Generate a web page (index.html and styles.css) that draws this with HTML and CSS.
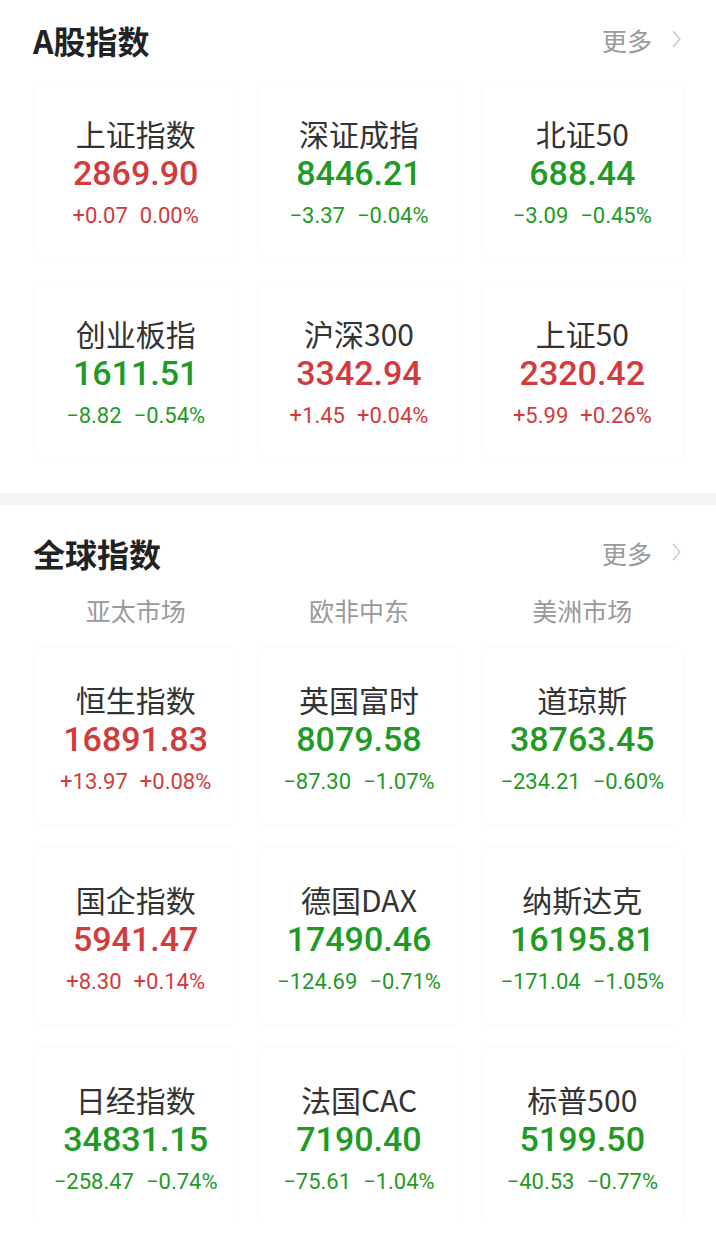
FILE: index.html
```html
<!DOCTYPE html>
<html lang="zh-CN">
<head>
    <meta charset="UTF-8">
    <meta name="viewport" content="width=device-width, initial-scale=1.0">
    <title>指数</title>
    <link rel="stylesheet" href="styles.css">
</head>
<body>
    <!-- A股指数 -->
    <section class="section first">
        <div class="section-head">
            <h2>A股指数</h2>
            <a class="more" href="#">更多
                <svg width="12" height="20" viewBox="0 0 12 20"><polyline points="3,2 10,10 3,18" fill="none" stroke="#c8c8c8" stroke-width="1.4"/></svg>
            </a>
        </div>
        <div class="grid">
            <div class="card up"><div class="name">上证指数</div><div class="price">2869.90</div><div class="change"><span>+0.07</span><span>0.00%</span></div></div>
            <div class="card down"><div class="name">深证成指</div><div class="price">8446.21</div><div class="change"><span>−3.37</span><span>−0.04%</span></div></div>
            <div class="card down"><div class="name">北证50</div><div class="price">688.44</div><div class="change"><span>−3.09</span><span>−0.45%</span></div></div>
            <div class="card down"><div class="name">创业板指</div><div class="price">1611.51</div><div class="change"><span>−8.82</span><span>−0.54%</span></div></div>
            <div class="card up"><div class="name">沪深300</div><div class="price">3342.94</div><div class="change"><span>+1.45</span><span>+0.04%</span></div></div>
            <div class="card up"><div class="name">上证50</div><div class="price">2320.42</div><div class="change"><span>+5.99</span><span>+0.26%</span></div></div>
        </div>
    </section>

    <div class="divider"></div>

    <!-- 全球指数 -->
    <section class="section second">
        <div class="section-head">
            <h2>全球指数</h2>
            <a class="more" href="#">更多
                <svg width="12" height="20" viewBox="0 0 12 20"><polyline points="3,2 10,10 3,18" fill="none" stroke="#c8c8c8" stroke-width="1.4"/></svg>
            </a>
        </div>
        <div class="tabs">
            <span>亚太市场</span>
            <span>欧非中东</span>
            <span>美洲市场</span>
        </div>
        <div class="grid">
            <div class="card up"><div class="name">恒生指数</div><div class="price">16891.83</div><div class="change"><span>+13.97</span><span>+0.08%</span></div></div>
            <div class="card down"><div class="name">英国富时</div><div class="price">8079.58</div><div class="change"><span>−87.30</span><span>−1.07%</span></div></div>
            <div class="card down"><div class="name">道琼斯</div><div class="price">38763.45</div><div class="change"><span>−234.21</span><span>−0.60%</span></div></div>
            <div class="card up"><div class="name">国企指数</div><div class="price">5941.47</div><div class="change"><span>+8.30</span><span>+0.14%</span></div></div>
            <div class="card down"><div class="name">德国DAX</div><div class="price">17490.46</div><div class="change"><span>−124.69</span><span>−0.71%</span></div></div>
            <div class="card down"><div class="name">纳斯达克</div><div class="price">16195.81</div><div class="change"><span>−171.04</span><span>−1.05%</span></div></div>
            <div class="card down"><div class="name">日经指数</div><div class="price">34831.15</div><div class="change"><span>−258.47</span><span>−0.74%</span></div></div>
            <div class="card down"><div class="name">法国CAC</div><div class="price">7190.40</div><div class="change"><span>−75.61</span><span>−1.04%</span></div></div>
            <div class="card down"><div class="name">标普500</div><div class="price">5199.50</div><div class="change"><span>−40.53</span><span>−0.77%</span></div></div>
        </div>
    </section>
</body>
</html>
```

FILE: styles.css
```css
/* 전체 페이지 */
body, html {
    margin: 0;
    padding: 0;
    background: #fff;
    font-family: "Noto Sans CJK SC", "Noto Sans", sans-serif;
    color: #333;
}

/* 섹션 */
.section {
    padding: 0 33px 0 35px;
}

.section.first {
    padding-top: 18px;
    padding-bottom: 35px;
}

.section.second {
    padding-top: 26px;
}

.section-head {
    display: flex;
    justify-content: space-between;
    align-items: center;
    height: 44px;
    margin-bottom: 20px;
}

.section-head h2 {
    margin: 0;
    margin-left: -2px;
    font-size: 32px;
    font-weight: 700;
    color: #222;
    line-height: 44px;
}

.more {
    display: flex;
    align-items: center;
    gap: 18px;
    font-size: 25px;
    color: #9a9a9a;
    text-decoration: none;
    margin-right: 1px;
}

.more svg {
    margin-top: -2px;
}

/* 구분선 */
.divider {
    height: 12px;
    background: #f4f4f4;
}

/* 시장 탭 */
.tabs {
    display: grid;
    grid-template-columns: repeat(3, 1fr);
    gap: 22px;
    margin-top: -1px;
    margin-bottom: 22px;
    text-align: center;
    font-size: 25px;
    line-height: 32px;
    color: #9a9a9a;
}

/* 카드 그리드 */
.grid {
    display: grid;
    grid-template-columns: repeat(3, 1fr);
    column-gap: 22px;
    row-gap: 24px;
}

.card {
    height: 176px;
    box-sizing: border-box;
    padding-top: 33px;
    display: flex;
    flex-direction: column;
    align-items: center;
    background: #fff;
    border-radius: 6px;
    box-shadow: 0 0 5px rgba(0, 0, 0, 0.035);
}

.name {
    font-size: 30px;
    line-height: 36px;
    color: #333;
}

.price {
    margin-top: 1px;
    font-family: Roboto, "Liberation Sans", sans-serif;
    font-size: 34px;
    font-weight: 500;
    line-height: 42px;
}

.change {
    margin-top: 7px;
    display: flex;
    gap: 12px;
    font-family: Roboto, "Liberation Sans", sans-serif;
    font-size: 22px;
    line-height: 30px;
}

.up .price, .up .change {
    color: #d23a3c;
}

.down .price, .down .change {
    color: #1e9a25;
}
```
